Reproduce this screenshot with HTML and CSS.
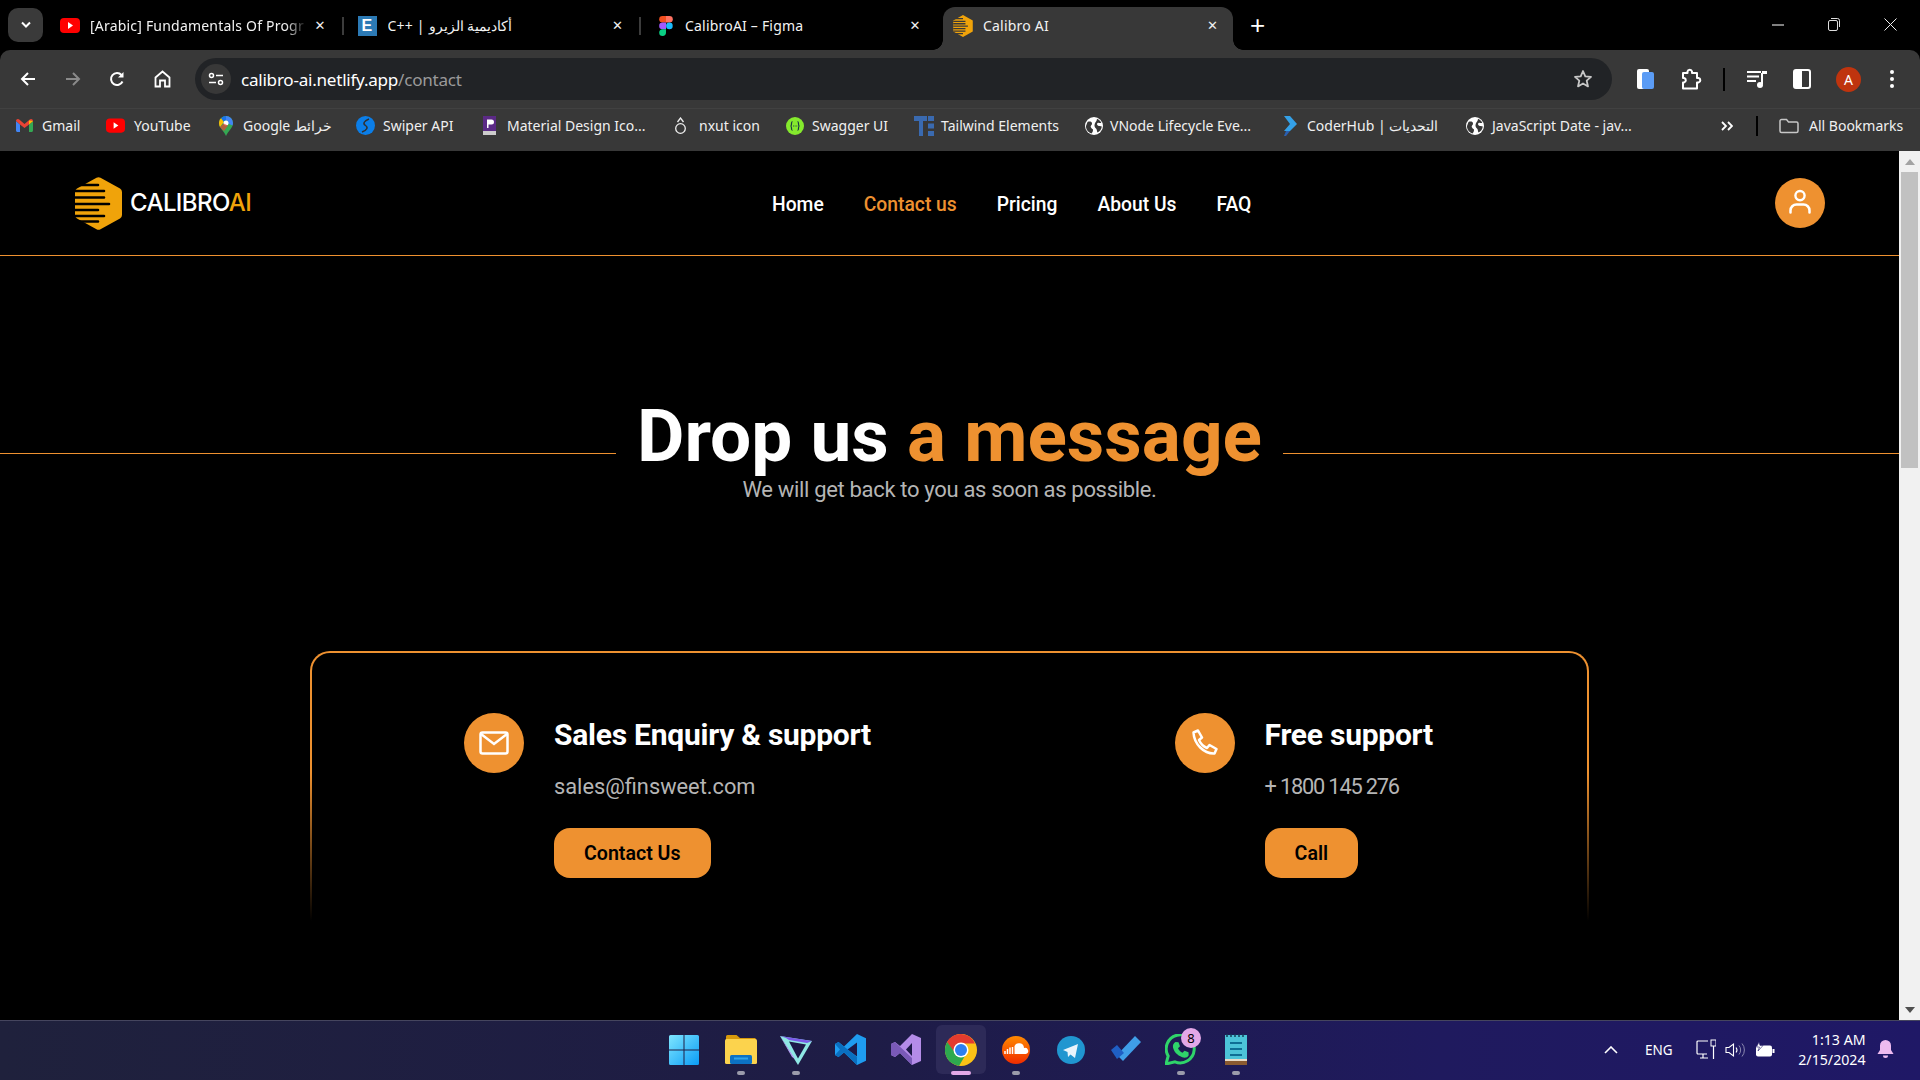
FILE: index.html
```html
<!DOCTYPE html>
<html lang="en">
<head>
<meta charset="utf-8">
<title>Calibro AI</title>
<link rel="stylesheet" href="styles.css">
</head>
<body>
<div class="app">
  <div class="tabstrip">
    <button class="tabsearch"><svg width="12" height="8" viewBox="0 0 12 8"><path d="M2 1.500l4 4 4-4" fill="none" stroke="#fff" stroke-width="2"/></svg></button>
    <div class="tab">
      <svg class="fav" width="20" height="15" viewBox="0 0 20 15"><rect width="20" height="15" rx="4" fill="#f00"/><path d="M8 4l5 3.500-5 3.500z" fill="#fff"/></svg>
      <span class="tabtitle fade">[Arabic] Fundamentals Of Progr</span><span class="tabx">✕</span><i class="tabsep"></i>
    </div>
    <div class="tab">
      <span class="efav">E</span>
      <span class="tabtitle">C++ | أكاديمية الزيرو</span><span class="tabx">✕</span><i class="tabsep"></i>
    </div>
    <div class="tab">
      <svg class="fav fav-fig" width="14" height="20" viewBox="0 0 14 20"><path d="M3.500 0H7v6.600H3.500a3.300 3.300 0 010-6.600z" fill="#f24e1e"/><path d="M7 0h3.500a3.300 3.300 0 010 6.600H7z" fill="#ff7262"/><path d="M3.500 6.600H7v6.600H3.500a3.300 3.300 0 010-6.600z" fill="#a259ff"/><circle cx="10.400" cy="9.900" r="3.300" fill="#1abcfe"/><path d="M3.500 13.200H7v3.400a3.400 3.400 0 11-3.500-3.400z" fill="#0acf83"/></svg>
      <span class="tabtitle">CalibroAI – Figma</span><span class="tabx">✕</span>
    </div>
    <div class="tab active">
      <svg class="fav" width="20" height="22" viewBox="0 0 48 54"><path d="M24 0l24 13.500v27L24 54 0 40.500v-27z" fill="#f0a30a"/><path d="M0 9h24M0 15.500h30M0 21.500h30M0 27.500h36M0 33.500h30M0 39.500h30M0 45.500h24" stroke="#383838" stroke-width="3.200"/></svg>
      <span class="tabtitle">Calibro AI</span><span class="tabx">✕</span>
    </div>
    <span class="newtab">+</span>
    <div class="winctl">
      <svg width="12" height="12" viewBox="0 0 12 12"><path d="M0 6h12" stroke="#fff"/></svg>
      <svg width="12" height="13" viewBox="0 0 12 13"><rect x=".5" y="2.500" width="9" height="10" rx="1.500" fill="none" stroke="#ddd"/><path d="M3 .5h6.500a2 2 0 012 2V9" fill="none" stroke="#ddd"/></svg>
      <svg width="13" height="13" viewBox="0 0 13 13"><path d="M.5.5l12 12M12.500.5l-12 12" stroke="#eee"/></svg>
    </div>
  </div>

  <div class="toolbar">
    <div class="navbtns">
      <svg width="16" height="16" viewBox="0 0 16 16"><path d="M15 8H2M8 2L2 8l6 6" fill="none" stroke="#fff" stroke-width="2"/></svg>
      <svg width="16" height="16" viewBox="0 0 16 16"><path d="M1 8h13M8 2l6 6-6 6" fill="none" stroke="#8a8a8a" stroke-width="2"/></svg>
      <svg width="16" height="16" viewBox="0 0 16 16"><path d="M13.500 10.500A6 6 0 1112.500 4" fill="none" stroke="#fff" stroke-width="2"/><path d="M14.500 1v5.500H9z" fill="#fff"/></svg>
      <svg width="17" height="18" viewBox="0 0 17 18"><path d="M1.500 7.500L8.500 1.500l7 6V16.500h-4.500V10.500H6V16.500H1.500z" fill="none" stroke="#fff" stroke-width="1.800"/></svg>
    </div>
    <div class="omnibox">
      <span class="siteinfo"><svg width="16" height="14" viewBox="0 0 16 14"><circle cx="3.500" cy="3.500" r="2" fill="none" stroke="#fff" stroke-width="1.500"/><path d="M8 3.500h7M1 10.500h7" stroke="#fff" stroke-width="1.500"/><circle cx="12.500" cy="10.500" r="2" fill="none" stroke="#fff" stroke-width="1.500"/></svg></span>
      <span class="url">calibro-ai.netlify.app<span class="urlpath">/contact</span></span>
      <svg class="star" width="20" height="20" viewBox="0 0 20 20"><path d="M10 2l2.300 5.400 5.700.5-4.300 3.800 1.300 5.700L10 14.400l-5 3 1.300-5.700L2 7.900l5.700-.5z" fill="none" stroke="#c7c7c7" stroke-width="1.800" stroke-linejoin="round"/></svg>
    </div>
    <div class="tools">
      <svg class="t-pages" width="17" height="20" viewBox="0 0 17 20"><rect width="12" height="20" rx="2" fill="#fff"/><rect x="5" y="3" width="12" height="17" rx="2" fill="#5b9cf5"/></svg>
      <svg class="t-puzzle" width="21" height="22" viewBox="0 0 21 22"><path d="M2 5h4.500V3.500a2.300 2.300 0 014.500 0V5h5v5h1.500a2.300 2.300 0 010 4.500H16v6H2v-6h1a2.300 2.300 0 000-4.500H2z" fill="none" stroke="#fff" stroke-width="2" stroke-linejoin="round"/></svg>
      <i class="toolsep"></i>
      <svg class="t-music" width="20" height="18" viewBox="0 0 20 18"><path d="M0 2h14M0 6.500h12M0 11h9" stroke="#fff" stroke-width="2"/><path d="M15 3v11" stroke="#fff" stroke-width="2"/><path d="M15 1h5v3h-5z" fill="#fff"/><circle cx="13" cy="15" r="3" fill="#fff"/></svg>
      <svg class="t-side" width="18" height="20" viewBox="0 0 18 20"><rect x="1" y="1" width="16" height="18" rx="2" fill="none" stroke="#fff" stroke-width="2"/><rect x="1" y="1" width="8" height="18" fill="#fff"/></svg>
      <span class="avatar">A</span>
      <svg class="t-dots" width="4" height="18" viewBox="0 0 4 18"><circle cx="2" cy="2" r="2" fill="#fff"/><circle cx="2" cy="9" r="2" fill="#fff"/><circle cx="2" cy="16" r="2" fill="#fff"/></svg>
    </div>
  </div>

  <div class="bookmarks">
    <span class="bm bm-gmail"><svg width="17" height="13" viewBox="0 0 17 13"><path d="M0 2v9.500C0 12.300.7 13 1.500 13H4V5.500z" fill="#4285f4"/><path d="M17 2v9.500c0 .8-.7 1.500-1.500 1.500H13V5.500z" fill="#34a853"/><path d="M0 2c0-1.800 2-2.600 3.200-1.500L8.500 5l5.300-4.500C15 -.6 17 .2 17 2l-4 3.500L8.500 9 4 5.500z" fill="#ea4335"/><path d="M13 1.500L17 2l-4 3.500z" fill="#fbbc04"/></svg><span>Gmail</span></span>
    <span class="bm bm-yt"><svg width="19" height="15" viewBox="0 0 20 15"><rect width="20" height="15" rx="4" fill="#f00"/><path d="M8 4l5 3.500-5 3.500z" fill="#fff"/></svg><span>YouTube</span></span>
    <span class="bm bm-maps"><svg width="14" height="20" viewBox="0 0 14 20"><path d="M7 20C5 15 0 12 0 7a7 7 0 0114 0c0 5-5 8-7 13z" fill="#34a853"/><path d="M2 2.200A7 7 0 017 0v4.500A2.500 2.500 0 004.800 6z" fill="#1a73e8"/><path d="M7 0a7 7 0 017 7c0 1-.2 1.800-.5 2.500L9 7.500A2.500 2.500 0 007 4.500z" fill="#4285f4"/><path d="M0 7c0-1.900.7-3.600 2-4.800L4.800 6 1 11C.4 9.900 0 8.500 0 7z" fill="#fbbc04"/><circle cx="7" cy="7" r="2.500" fill="#fff"/><path d="M1 11l3.800-3.500L9 9.500 5 15C3.500 13.500 2 12.500 1 11z" fill="#ea4335" opacity=".7"/></svg><span>Google خرائط</span></span>
    <span class="bm bm-swiper"><svg width="19" height="19" viewBox="0 0 19 19"><circle cx="9.500" cy="9.500" r="9.500" fill="#0b7ee8"/><path d="M13 3C8 5 6.500 7.500 9.500 9.500S11 14 6 16" fill="none" stroke="#303030" stroke-width="1.500"/></svg><span>Swiper API</span></span>
    <span class="bm bm-mat"><svg width="15" height="19" viewBox="0 0 15 19"><rect x="1" y="0" width="13" height="17" fill="#5b2a86"/><rect x="1" y="15" width="13" height="4" fill="#ccc"/><path d="M5 3.500h4.500a2 2 0 010 5H6.500v3.500H5z" fill="#fff"/></svg><span>Material Design Ico...</span></span>
    <span class="bm bm-nuxt"><svg width="11" height="18" viewBox="0 0 11 18"><circle cx="5.500" cy="11.500" r="4.800" fill="none" stroke="#eee" stroke-width="1.300"/><path d="M2.500 5l3-4 3 4" fill="none" stroke="#eee" stroke-width="1.300"/></svg><span>nxut icon</span></span>
    <span class="bm bm-swag"><svg width="18" height="18" viewBox="0 0 18 18"><circle cx="9" cy="9" r="9" fill="#85ea2d"/><path d="M6.500 4.500c-2 0 0 4.500-2 4.500 2 0 0 4.500 2 4.500M11.500 4.500c2 0 0 4.500 2 4.500-2 0 0 4.500-2 4.500" fill="none" stroke="#173647" stroke-width="1.200"/><path d="M7 9h.8M8.700 9h.8M10.400 9h.8" stroke="#173647" stroke-width="1.200"/></svg><span>Swagger UI</span></span>
    <span class="bm bm-tw"><svg width="20" height="20" viewBox="0 0 20 20"><path d="M0 0h13v5H9v15H5V5H0z" fill="#3a6ab0"/><path d="M14 0h6v5h-6zM14 7.500h6v5h-6zM14 15h6v5h-6z" fill="#3a6ab0"/></svg><span>Tailwind Elements</span></span>
    <span class="bm bm-vn"><svg width="18" height="18" viewBox="0 0 18 18"><circle cx="9" cy="9" r="9" fill="#fff"/><path d="M2.500 5C4.500 4 7 4.500 7 6.500S5 8.500 6 10.500s2 1 2 2.500-.7 2.500-1.500 3.500C3 15.500.8 12 1 9zM12 1.800c2 .8 3.500 2.300 4.300 4.200-1.500.3-2.300-.5-3.300-.3s-1.500 1.800-.2 2.800 2.800.2 4 1c-.3 2.800-2 5-4.300 6-.7-1.500-.5-3-1.500-4s-2-2.500-1.300-4.500S12 4 12 1.800z" fill="#383838"/></svg><span>VNode Lifecycle Eve...</span></span>
    <span class="bm bm-ch"><svg width="14" height="20" viewBox="0 0 14 20"><path d="M1 0h6l7 8-7 7H1l6-7z" fill="#34a1e8"/><path d="M3 15h4l-4 5H1z" fill="#2a5fb0"/></svg><span>CoderHub | التحديات</span></span>
    <span class="bm bm-js"><svg width="18" height="18" viewBox="0 0 18 18"><circle cx="9" cy="9" r="9" fill="#fff"/><path d="M2.500 5C4.500 4 7 4.500 7 6.500S5 8.500 6 10.500s2 1 2 2.500-.7 2.500-1.500 3.500C3 15.500.8 12 1 9zM12 1.800c2 .8 3.500 2.300 4.300 4.200-1.500.3-2.300-.5-3.300-.3s-1.500 1.800-.2 2.800 2.800.2 4 1c-.3 2.800-2 5-4.300 6-.7-1.500-.5-3-1.500-4s-2-2.500-1.300-4.500S12 4 12 1.800z" fill="#383838"/></svg><span>JavaScript Date - jav...</span></span>
    <svg class="bm-more" width="12" height="10" viewBox="0 0 12 10"><path d="M1 1l4 4-4 4M7 1l4 4-4 4" fill="none" stroke="#fff" stroke-width="1.800"/></svg>
    <i class="bmsep"></i>
    <span class="bm bm-all"><svg width="20" height="16" viewBox="0 0 20 16"><path d="M1 3a1.500 1.500 0 011.500-1.500h5L9.500 4h8A1.500 1.500 0 0119 5.500V13a1.500 1.500 0 01-1.500 1.500h-15A1.500 1.500 0 011 13z" fill="none" stroke="#c7c7c7" stroke-width="1.500"/></svg><span>All Bookmarks</span></span>
  </div>

  <div class="viewport">
    <main class="page">
      <header class="site-header">
        <a class="logo">
          <svg class="logo-mark" width="47" height="53" viewBox="0 0 47 53"><path d="M21.500.8a4 4 0 014 0L45 11.500a4 4 0 012 3.500v23a4 4 0 01-2 3.500L25.500 52.200a4 4 0 01-4 0L2 41.500a4 4 0 01-2-3.500V15a4 4 0 012-3.500z" fill="#f0a30a"/><path d="M-1 8h24M-1 14h30M-1 20.500h30M-1 27h35M-1 33h24M-1 39h30M-1 44.500h24" stroke="#000" stroke-width="2.600" stroke-linecap="round"/></svg>
          <span class="logo-text">CALIBRO<span class="logo-ai">AI</span></span>
        </a>
        <nav class="nav">
          <a>Home</a><a class="current">Contact us</a><a>Pricing</a><a>About Us</a><a>FAQ</a>
        </nav>
        <span class="user"><svg width="24" height="28" viewBox="0 0 24 28"><circle cx="12" cy="6.600" r="4.600" fill="none" stroke="#fff" stroke-width="2.400"/><path d="M2.500 23.500v-2a6 6 0 016-6h7a6 6 0 016 6v2" fill="none" stroke="#fff" stroke-width="2.500" stroke-linecap="round"/></svg></span>
      </header>

      <section class="hero">
        <div class="hero-row">
          <i class="hero-line"></i>
          <h1>Drop us <span class="accent">a message</span></h1>
          <i class="hero-line"></i>
        </div>
        <p class="hero-sub">We will get back to you as soon as possible.</p>
      </section>

      <section class="card">
        <div class="contact">
          <span class="cicon"><svg width="30" height="24" viewBox="0 0 30 24"><rect x="1.500" y="1.500" width="27" height="21" rx="2" fill="none" stroke="#fff" stroke-width="2.500"/><path d="M2 3l13 10L28 3" fill="none" stroke="#fff" stroke-width="2.500"/></svg></span>
          <div class="cbody">
            <h2>Sales Enquiry &amp; support</h2>
            <p>sales@finsweet.com</p>
            <button class="cbtn">Contact Us</button>
          </div>
        </div>
        <div class="contact">
          <span class="cicon"><svg width="28" height="28" viewBox="0 0 28 28"><path d="M2.500 3.500L7 1.500l4 7-3 2.500c1.500 3.500 4.500 6.500 8 8l2.500-3 7 4-2 4.500C13 25 3 15 2.500 3.500z" fill="none" stroke="#fff" stroke-width="2.500" stroke-linejoin="round"/></svg></span>
          <div class="cbody">
            <h2>Free support</h2>
            <p class="phone">+ 1800 145 276</p>
            <button class="cbtn">Call</button>
          </div>
        </div>
      </section>
    </main>
    <div class="scrollbar">
      <span class="sb-arrow"><svg width="10" height="6" viewBox="0 0 10 6"><path d="M5 0l5 6H0z" fill="#a3a3a3"/></svg></span>
      <span class="sb-thumb"></span>
      <span class="sb-track"></span>
      <span class="sb-arrow"><svg width="10" height="6" viewBox="0 0 10 6"><path d="M0 0h10L5 6z" fill="#505050"/></svg></span>
    </div>
  </div>

  <footer class="taskbar">
    <div class="tb-apps">
      <span class="app-i app-win"><svg width="30" height="30" viewBox="0 0 30 30"><defs><linearGradient id="w" x1="0" y1="0" x2="1" y2="1"><stop offset="0" stop-color="#7fe6ff"/><stop offset="1" stop-color="#0a9cf5"/></linearGradient></defs><path d="M0 1.500A1.500 1.500 0 011.500 0h13v14.500H0zM15.500 0h13A1.500 1.500 0 0130 1.500v13H15.500zM0 15.500h14.500V30h-13A1.500 1.500 0 010 28.500zM15.500 15.500H30v13a1.500 1.500 0 01-1.500 1.500h-13z" fill="url(#w)"/></svg></span>
      <span class="app-i running"><svg width="32" height="29" viewBox="0 0 32 29"><path d="M1 1.500A1.500 1.500 0 012.500 0h9L15 3h15.500v3H1z" fill="#d89a0c"/><rect x="0" y="4" width="32" height="25" rx="1.500" fill="#fcd34d"/><rect x="5" y="20" width="22" height="9" rx="1.500" fill="#0c72c4"/><path d="M9 23.500h14" stroke="#2fa4ea" stroke-width="2"/></svg></span>
      <span class="app-i running"><svg width="32" height="30" viewBox="0 0 32 30"><path d="M0 1l32 5-14 24z" fill="#8fe8e4"/><path d="M0 1l32 5-5 2L9 5 6 3z" fill="#7a5ae8"/><path d="M0 1l15 23-3-2z" fill="#b79cf5"/><path d="M9 6.500l17 3-8 14z" fill="#1d1a48"/></svg></span>
      <span class="app-i"><svg width="31" height="31" viewBox="0 0 31 31"><path d="M22 0l9 4.300v22.400L22 31 9 18.500 3.500 23 0 21V10l3.500-2L9 12.500z" fill="#1f9cf0"/><path d="M22 8.500L12.500 15.500 22 22.500z" fill="#1d1a48"/><path d="M0 10l3.500-2 18.500 15v8L9 18.500 3.500 23 0 21l5-5.500z" fill="#0a6fc0"/></svg></span>
      <span class="app-i"><svg width="30" height="31" viewBox="0 0 30 31"><path d="M21 0l9 4v23l-9 4-12-12-5 4-4-2V10l4-2 5 4z" fill="#b48ce8"/><path d="M21 9l-6 6.500 6 6.500z" fill="#1d1a48"/><path d="M4 11.500l4 4-4 4z" fill="#1d1a48"/><path d="M0 10l4-2 17 16v7L9 19l-5 4-4-2z" fill="#7a5ab8"/></svg></span>
      <span class="app-i active"><svg width="32" height="32" viewBox="0 0 32 32"><circle cx="16" cy="16" r="16" fill="#fbc116"/><path d="M16 0a16 16 0 00-13.900 8l7 12L16 9.500h13.900A16 16 0 0016 0z" fill="#e33b2e"/><path d="M2.100 8A16 16 0 0014 31.900l7-12-5.500 2.100A6.500 6.500 0 019.500 18z" fill="#2da94f"/><circle cx="16" cy="16" r="7.500" fill="#fff"/><circle cx="16" cy="16" r="6" fill="#2d7ff0"/></svg></span>
      <span class="app-i running"><svg width="28" height="28" viewBox="0 0 28 28"><defs><linearGradient id="sc" x1="0" y1="0" x2="0" y2="1"><stop offset="0" stop-color="#ff8a00"/><stop offset="1" stop-color="#f02c00"/></linearGradient></defs><circle cx="14" cy="14" r="14" fill="url(#sc)"/><path d="M3 18v-3M5.500 18v-5M8 18v-6.500M10.500 18V11" stroke="#fff" stroke-width="1.500"/><path d="M12.500 18V10a5 5 0 019.500 2 3 3 0 012 6z" fill="#fff"/></svg></span>
      <span class="app-i"><svg width="28" height="28" viewBox="0 0 28 28"><circle cx="14" cy="14" r="14" fill="#2096d0"/><path d="M6 14l15-6-3 14-4.500-3.500L11 21l-.5-5z" fill="#e8f4fb"/></svg></span>
      <span class="app-i"><svg width="30" height="30" viewBox="0 0 30 30"><path d="M12 26l18-19-6-6L6 20z" fill="#3f9ee8"/><path d="M0 15l6-5 7 8-7 6z" fill="#1f5fc4"/></svg></span>
      <span class="app-i running"><svg width="31" height="31" viewBox="0 0 31 31"><path d="M1 30l2.200-8A14 14 0 1110 27.800z" fill="none" stroke="#2fd46a" stroke-width="3"/><path d="M10.500 8l3 .2 1.500 4-2 2c1 2 2.500 3.500 4.500 4.500l2-2 4 1.500.2 3c-1 2.500-4 3-6.500 2C12 21 9 18 8 13.500 7.600 11 8.500 9 10.500 8z" fill="#2fd46a"/></svg><span class="badge">8</span></span>
      <span class="app-i running"><svg width="22" height="31" viewBox="0 0 22 31"><rect x="0" y="1" width="22" height="30" fill="#4cc4d8"/><rect y="27" width="22" height="4" fill="#8a5a30"/><rect y="25" width="22" height="2" fill="#e8dcc8"/><path d="M5 9h12M5 15h12M5 21h12" stroke="#0f6f94" stroke-width="2"/><path d="M2 0v3M6 0v3M10 0v3M14 0v3M18 0v3" stroke="#123e58" stroke-width="1.500"/></svg></span>
    </div>
    <div class="tb-tray">
      <svg class="tray-up" width="14" height="8" viewBox="0 0 14 8"><path d="M1 7l6-6 6 6" fill="none" stroke="#fff" stroke-width="1.600"/></svg>
      <span class="tray-lang">ENG</span>
      <svg class="tray-net" width="20" height="21" viewBox="0 0 20 21"><path d="M11 15H2a1 1 0 01-1-1V3a1 1 0 011-1h10M4 19h8M7 15v4" fill="none" stroke="#fff" stroke-width="1.200"/><rect x="15" y="1" width="5" height="6" fill="none" stroke="#fff"/><path d="M17.500 7v13" stroke="#fff" stroke-width="1.200"/></svg>
      <svg class="tray-vol" width="20" height="18" viewBox="0 0 20 18"><path d="M1 6.500h3L8.500 3v12L4 11.500H1z" fill="none" stroke="#fff" stroke-width="1.100"/><path d="M11 6.500a4 4 0 010 5" fill="none" stroke="#fff" stroke-width="1.100"/><path d="M14 4.500a7 7 0 010 9M17 2.500a10 10 0 010 13" fill="none" stroke="#8b88b0" stroke-width="1"/></svg>
      <svg class="tray-bat" width="20" height="16" viewBox="0 0 20 16"><rect x="1" y="3.500" width="16" height="11" rx="2" fill="#fff"/><rect x="17.500" y="7" width="2" height="4" fill="#fff"/><path d="M4 0L1.500 5h3L3 9l5-5.500H5z" fill="#fff" stroke="#1f1866" stroke-width=".6"/></svg>
      <div class="clock"><span>1:13 AM</span><span>2/15/2024</span></div>
      <svg class="tray-bell" width="17" height="19" viewBox="0 0 17 19"><path d="M8.500 0A5.500 5.500 0 003 5.500V10l-2.500 4h16L14 10V5.500A5.500 5.500 0 008.500 0z" fill="#eebbf0"/><path d="M6 15.500h5a2.500 2.500 0 01-5 0z" fill="#eebbf0"/></svg>
    </div>
  </footer>
</div>
</body>
</html>
```

FILE: styles.css
```css
* { box-sizing: border-box; }
html, body { margin: 0; height: 100%; overflow: hidden; background: #000; }
i { display: block; }
h1, h2, p { margin: 0; }
button { border: 0; font: inherit; }

.app {
  width: 1920px; height: 1080px;
  display: flex; flex-direction: column;
  font-family: "Noto Sans", "Noto Sans CJK SC", sans-serif;
}

/* browser chrome */
.tabstrip { height: 50px; display: flex; align-items: flex-end; background: #000; padding-left: 8px; color: #fff; }
.tabsearch { width: 35px; height: 34px; margin-bottom: 8px; border-radius: 10px; background: #3a3a3a; display: flex; align-items: center; justify-content: center; }
.tab { position: relative; width: 297.500px; height: 43px; padding: 0 17px 6px 15px; display: flex; align-items: center; flex: none; font-size: 14px; letter-spacing: .2px; }
.tab:nth-of-type(1) { margin-left: 2px; }
.tab.active { width: 290px; margin-left: 5.500px; padding: 0 15px 6px 10px; background: #383838; border-radius: 12px 12px 0 0; }
.tab.active::before, .tab.active::after { content: ""; position: absolute; bottom: 0; width: 10px; height: 10px; }
.tab.active::before { left: -10px; background: radial-gradient(circle at 0 0, transparent 9.500px, #383838 10px); }
.tab.active::after { right: -10px; background: radial-gradient(circle at 100% 0, transparent 9.500px, #383838 10px); }
.fav { flex: none; margin-right: 10px; }
.fav-fig { margin: 0 12px 0 4px; }
.efav { width: 19px; height: 20px; background: #2c7ab5; color: #fff; font: 700 16px/20px "Liberation Sans", sans-serif; text-align: center; margin-right: 11px; flex: none; }
.tabtitle { flex: 1; white-space: nowrap; overflow: hidden; color: #f2f2f2; }
.fade { -webkit-mask-image: linear-gradient(90deg, #000 90%, transparent); mask-image: linear-gradient(90deg, #000 90%, transparent); }
.tabx { font: 13px/1 "DejaVu Sans", sans-serif; color: #eee; flex: none; margin-left: 8px; letter-spacing: 0; }
.tabsep { position: absolute; right: -1px; top: 10px; width: 2px; height: 18px; background: #3c3c3c; }
.newtab { font: 400 26px/1 "Liberation Sans", sans-serif; margin: 0 0 12px 17px; }
.winctl { margin-left: auto; height: 50px; align-self: flex-start; display: flex; align-items: center; gap: 44px; padding: 0 23px 1px 0; }

.toolbar { height: 58px; background: #383838; padding: 8px 8px 8px 0; display: flex; align-items: flex-start; border-radius: 10px 10px 0 0; }
.navbtns { width: 195px; height: 42px; padding-left: 20px; display: flex; align-items: center; gap: 28.500px; flex: none; }
.omnibox { width: 1417px; height: 42px; border-radius: 21px; background: #212326; display: flex; align-items: center; padding: 0 19.500px 0 6px; flex: none; }
.siteinfo { width: 30px; height: 30px; border-radius: 50%; background: #383838; display: flex; align-items: center; justify-content: center; flex: none; }
.url { margin-left: 10px; font-size: 17.100px; letter-spacing: -.25px; color: #fff; flex: 1; }
.urlpath { color: #9a9a9a; }
.tools { display: flex; align-items: center; height: 42px; flex: 1; }
.t-pages { margin-left: 25px; }
.t-puzzle { margin-left: 27px; }
.toolsep { width: 2px; height: 23px; background: #000; margin-left: 21px; }
.t-music { margin-left: 22px; }
.t-side { margin-left: 26px; }
.avatar { width: 25px; height: 25px; border-radius: 50%; background: #bf340e; color: #fff; font-size: 14px; display: flex; align-items: center; justify-content: center; margin-left: 25px; }
.t-dots { margin-left: 29px; }

.bookmarks { height: 43px; background: #383838; border-top: 1px solid #414141; display: flex; align-items: center; color: #f0f0f0; font-size: 14px; padding-bottom: 9px; }
.bm { display: flex; align-items: center; white-space: nowrap; flex: none; }
.bm svg { flex: none; }
.bm-gmail { margin-left: 16px; gap: 9px; width: 90px; }
.bm-yt { gap: 9px; width: 113px; }
.bm-maps { gap: 10px; width: 137px; }
.bm-swiper { gap: 8px; width: 126px; }
.bm-mat { gap: 10px; width: 193px; }
.bm-nuxt { gap: 13px; width: 111px; }
.bm-swag { gap: 8px; width: 128px; }
.bm-tw { gap: 7px; width: 171px; }
.bm-vn { gap: 7px; width: 198px; }
.bm-ch { gap: 10px; width: 183px; }
.bm-js { gap: 8px; width: 255px; }
.bm-more { flex: none; }
.bmsep { width: 2px; height: 20px; background: #000; margin-left: 23px; }
.bm-all { margin-left: 21px; gap: 10px; }

/* page */
.viewport { height: 869px; display: flex; overflow: hidden; }
.page { width: 1899px; background: #000; color: #fff; font-family: Roboto, sans-serif; flex: none; }
.site-header { height: 105px; border-bottom: 1px solid #ee9130; display: flex; align-items: center; padding: 0 74px 0 75px; }
.logo { display: flex; align-items: center; gap: 8px; width: 697px; flex: none; }
.logo-mark { flex: none; }
.logo-text { font: 500 24px/1 "Inter", sans-serif; letter-spacing: -.6px; color: #fff; }
.logo-ai { color: #f0a30a; }
.nav { display: flex; gap: 40px; font-size: 19.300px; font-weight: 500; padding-top: 2px; }
.nav .current { color: #ee9130; }
.user { width: 50px; height: 50px; border-radius: 50%; background: #ee9130; margin-left: auto; display: flex; align-items: center; justify-content: center; flex: none; }

.hero { height: 395px; padding-top: 144px; }
.hero-row { display: flex; gap: 21px; height: 72px; align-items: flex-start; }
.hero-line { flex: 1; height: 1px; background: #ee9130; margin-top: 53px; }
.hero h1 { font-size: 73px; line-height: 72px; font-weight: 700; white-space: nowrap; }
.accent { color: #ee9130; }
.hero-sub { text-align: center; font-size: 22px; letter-spacing: -.33px; line-height: 24px; color: #b5b5b5; margin-top: 6px; }

.card { width: 1279px; height: 270px; margin-left: 310px; padding: 60px 154px 0 152px; display: flex; justify-content: space-between; align-items: flex-start;
  border: 2px solid transparent; border-bottom: 0; border-radius: 20px 20px 0 0;
  background: linear-gradient(#000, #000) padding-box, linear-gradient(#ee9130 0%, #ee9130 45%, rgba(238,145,48,0) 100%) border-box; }
.contact { display: flex; gap: 30px; }
.cicon { width: 60px; height: 60px; border-radius: 50%; background: #ee9130; display: flex; align-items: center; justify-content: center; flex: none; }
.cbody { display: flex; flex-direction: column; align-items: flex-start; }
.cbody h2 { font-size: 30px; line-height: 44px; font-weight: 700; letter-spacing: -.25px; }
.cbody p { font-size: 21.800px; line-height: 30px; color: #b5b5b5; margin-top: 15px; }
.cbody .phone { letter-spacing: -1.200px; }
.cbtn { height: 50px; margin-top: 26px; padding: 0 30px; border-radius: 16px; background: #ee9130; color: #000; font-family: Roboto, sans-serif; font-size: 19.600px; font-weight: 600; }

.scrollbar { width: 21px; flex: none; background: #f1f1f1; display: flex; flex-direction: column; }
.sb-arrow { height: 21px; display: flex; align-items: center; justify-content: center; flex: none; }
.sb-thumb { height: 296px; background: #c1c1c1; margin: 0 2px; flex: none; }
.sb-track { flex: 1; }

/* taskbar */
.taskbar { height: 60px; padding-bottom: 2px; background: linear-gradient(90deg, #1f213c 0%, #1e1c46 45%, #1f1a5e 75%, #1f1866 100%); border-top: 1px solid #45455e; display: flex; align-items: center; color: #fff; }
.tb-apps { display: flex; margin-left: 658px; width: 606px; flex: none; }
.app-i { position: relative; width: 55px; height: 49px; flex: none; display: flex; align-items: center; justify-content: center; border-radius: 6px; }
.app-win svg { margin-right: 3px; }
.app-i.running::after, .app-i.active::after { content: ""; position: absolute; left: 50%; bottom: -1px; width: 8px; height: 4px; margin-left: -4px; border-radius: 2px; background: #9b9bab; }
.app-i.active { background: #2d2a58; width: 50px; margin: 0 2.500px; }
.app-i.active::after { width: 20px; margin-left: -10px; background: #e3a8e8; }
.badge { position: absolute; left: 28px; top: 3px; width: 20px; height: 20px; border-radius: 50%; background: #e3a8e8; color: #000; font: 13px/20px "Noto Sans", sans-serif; text-align: center; }
.tb-tray { display: flex; align-items: center; flex: 1; }
.tray-up { margin-left: 340px; flex: none; }
.tray-lang { margin-left: 27px; font-size: 13.500px; }
.tray-net { margin-left: 23px; flex: none; }
.tray-vol { margin-left: 9px; flex: none; }
.tray-bat { margin-left: 10px; flex: none; }
.clock { display: flex; flex-direction: column; align-items: flex-end; width: 91px; font-size: 14.200px; line-height: 20px; }
.tray-bell { margin-left: 11px; flex: none; }
```
